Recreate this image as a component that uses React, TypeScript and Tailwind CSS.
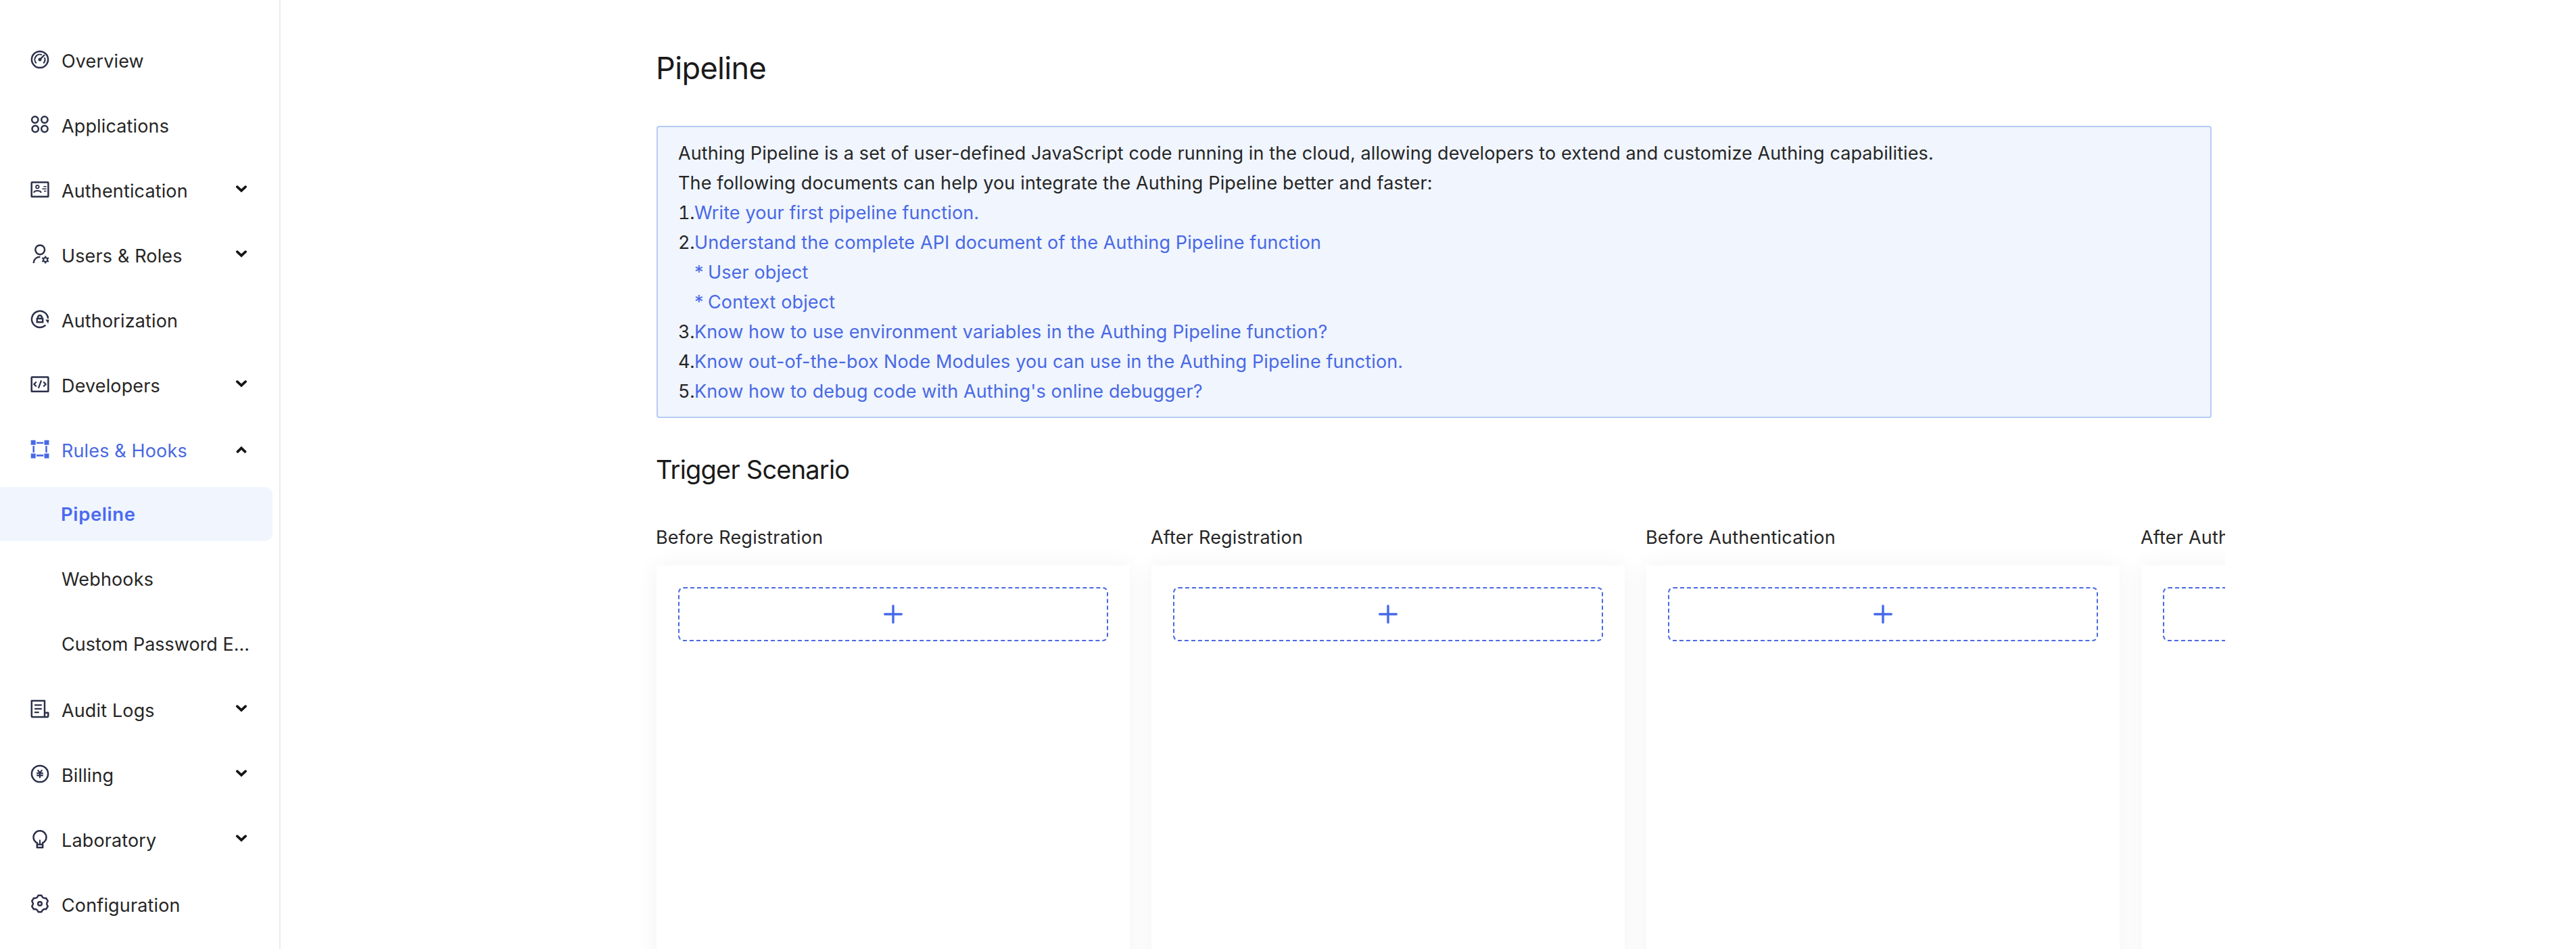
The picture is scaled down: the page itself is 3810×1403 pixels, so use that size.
import type { ReactNode } from "react";

const icons: Record<string, ReactNode> = {
  overview: (
    <>
      <circle r="12.1" />
      <path d="M-5.2 5.4A7.5 7.5 0 0 1 3 -6.9M6.9 -2.9A7.5 7.5 0 0 1 5.2 5.4" strokeWidth="2.1" />
      <path d="M0 0L7 -7" strokeWidth="2.4" />
      <circle r="2.5" fill="currentColor" stroke="none" />
    </>
  ),
  applications: (
    <>
      <circle cx="-7.2" cy="-7" r="4.7" />
      <circle cx="6.9" cy="-7" r="4.7" />
      <circle cx="-6.8" cy="6.5" r="4.7" />
      <circle cx="6.9" cy="6.5" r="4.7" />
    </>
  ),
  authentication: (
    <>
      <rect x="-12.3" y="-10.6" width="24.7" height="21.4" rx="0.6" />
      <circle cx="-3.6" cy="-3.7" r="2.3" strokeWidth="1.8" />
      <path d="M-9 4.8C-7.5 1.2 0.3 1.2 1.9 4.8" strokeWidth="2" />
      <path d="M5.3 -4.2H9.7M3.3 -0.8H9.7M6 2.5H9.7" strokeWidth="1.6" />
    </>
  ),
  users: (
    <>
      <circle cx="0.2" cy="-6.7" r="6.9" />
      <path d="M-9.3 13C-9 7.5 -5.4 3.9 0.4 3.8" />
      <path d="M8.2 2.4V13.6M3.4 5.2L13 10.8M13 5.2L3.4 10.8" strokeWidth="2.2" />
      <circle cx="8.2" cy="8" r="3" fill="#fff" strokeWidth="2" />
    </>
  ),
  authorization: (
    <>
      <path d="M12.1 -1.2A12.1 12.1 0 1 0 8.4 8.7" />
      <path d="M8.2 0.4L13.6 0.4L12.2 6.6Z" fill="currentColor" stroke="none" />
      <path d="M-4.2 -1.1H4.2V4.3H-4.2Z" />
      <path d="M-2.9 -1V-2.8A2.9 2.9 0 0 1 2.9 -2.8V-1" />
    </>
  ),
  developers: (
    <>
      <rect x="-12.3" y="-10.6" width="24.7" height="21.4" rx="0.6" />
      <path d="M-5.2 -3.5L-8.7 0L-5.2 3.5M5.2 -3.5L8.7 0L5.2 3.5" strokeWidth="2.2" />
      <path d="M2.1 -5.6L-2.1 5.8" strokeWidth="2.2" />
    </>
  ),
  rules: (
    <>
      <path
        d="M-13.3 -13.2H-6.3V-6.2H-13.3ZM6.5 -13.2H13.5V-6.2H6.5ZM-13.3 6.6H-6.3V13.6H-13.3ZM6.5 6.6H13.5V13.6H6.5Z"
        fill="currentColor"
        stroke="none"
      />
      <path d="M-5 -9.3H5.3M-5 9.4H5.3M-9.3 -4.7V5.1M9.5 -4.7V5.1" strokeWidth="2.6" />
    </>
  ),
  audit: (
    <>
      <path d="M7 12V-12.1H-12.2V10.4Q-12.2 12.1 -10.5 12.1H10.3Q12.3 12.1 12.3 10V5.7H7" strokeLinejoin="round" />
      <path d="M-8 -5.7H2.8M-8 -0.2H2.8M-8 5.2H-1.3" strokeWidth="2.2" />
    </>
  ),
  billing: (
    <>
      <circle r="12.1" />
      <path d="M-3.4 -5.6L0 -1.7L3.4 -5.6M-4.8 -0.9H4.8M-4.8 2.4H4.8M0 -1.7V6.2" strokeWidth="2.1" />
    </>
  ),
  laboratory: (
    <>
      <path d="M-4 8.2V6.2C-7.6 4.5 -9.5 1.5 -9.5 -2.2A9.5 9.5 0 0 1 9.5 -2.2C9.5 1.5 7.6 4.5 4 6.2V8.2" />
      <path d="M-4.2 8.4H4.2V13.1H-4.2Z" strokeLinejoin="round" />
      <path d="M0 1.4V8" strokeWidth="2" />
    </>
  ),
  configuration: (
    <>
      <path
        d="M-2.4 -12.2H2.4L4.2 -9.2Q6.4 -7.6 9.2 -8.2L11.8 -3.9Q10 -1.2 10.2 0Q10 1.2 11.8 3.9L9.2 8.2Q6.4 7.6 4.2 9.2L2.4 12.2H-2.4L-4.2 9.2Q-6.4 7.6 -9.2 8.2L-11.8 3.9Q-10 1.2 -10.2 0Q-10 -1.2 -11.8 -3.9L-9.2 -8.2Q-6.4 -7.6 -4.2 -9.2Z"
        strokeLinejoin="round"
      />
      <circle r="2.8" />
    </>
  ),
};

function Icon({ name }: { name: string }) {
  return (
    <svg
      viewBox="-15 -15 30 30"
      className="mb-1 size-[30px] shrink-0"
      fill="none"
      stroke="currentColor"
      strokeWidth="2.5"
    >
      {icons[name]}
    </svg>
  );
}

function Chevron({ up }: { up?: boolean }) {
  return (
    <svg
      viewBox="-9 -6 18 12"
      className={up ? "mb-[3px] h-3 w-[18px] text-[#161616]" : "mb-[6px] h-3 w-[18px] text-[#161616]"}
      fill="none"
      stroke="currentColor"
      strokeWidth="3.8"
      strokeLinecap="round"
    >
      <path d={up ? "M-5.6 2.8L0 -2.6L5.6 2.8" : "M-6.2 -2.8L0 2.9L6.2 -2.8"} />
    </svg>
  );
}

type Item = { icon: string; label: string; arrow?: "up" | "down" };

const top: Item[] = [
  { icon: "overview", label: "Overview" },
  { icon: "applications", label: "Applications" },
  { icon: "authentication", label: "Authentication", arrow: "down" },
  { icon: "users", label: "Users & Roles", arrow: "down" },
  { icon: "authorization", label: "Authorization" },
  { icon: "developers", label: "Developers", arrow: "down" },
  { icon: "rules", label: "Rules & Hooks", arrow: "up" },
];

const bottom: Item[] = [
  { icon: "audit", label: "Audit Logs", arrow: "down" },
  { icon: "billing", label: "Billing", arrow: "down" },
  { icon: "laboratory", label: "Laboratory", arrow: "down" },
  { icon: "configuration", label: "Configuration" },
];

function NavItem({ icon, label, arrow }: Item) {
  const open = arrow === "up";
  return (
    <a className={`flex h-20 items-center pr-[47px] pl-11 ${open ? "text-[#4969e4]" : "text-[#2b3049]"}`}>
      <Icon name={icon} />
      <span className={`ml-[17px] flex-1 pt-0.5 ${open ? "text-[#4969e4]" : "text-[#262626]"}`}>{label}</span>
      {arrow && <Chevron up={open} />}
    </a>
  );
}

function Sidebar() {
  return (
    <nav className="flex w-[415px] shrink-0 flex-col gap-4 border-r-2 border-[#ebebeb] pt-[50px] text-[27px] tracking-[0.14px] whitespace-nowrap">
      {top.map((i) => (
        <NavItem key={i.label} {...i} />
      ))}
      <div className="-mt-0.5 mb-0.5 flex flex-col gap-4 text-[#262626]">
        <a className="-ml-2 flex h-20 w-[411px] items-center rounded-xl bg-[#f0f5fe] pt-0.5 pl-[98px] text-[27.5px] font-semibold tracking-[0.6px] text-[#4a6af0]">
          Pipeline
        </a>
        <a className="flex h-20 items-center pt-0.5 pl-[91px]">Webhooks</a>
        <a className="flex h-20 items-center pt-0.5 pl-[91px] tracking-[0px]">Custom Password E...</a>
      </div>
      {bottom.map((i) => (
        <NavItem key={i.label} {...i} />
      ))}
    </nav>
  );
}

const docs = [
  { n: "1.", text: "Write your first pipeline function." },
  { n: "2.", text: "Understand the complete API document of the Authing Pipeline function" },
  { n: "", text: "User object" },
  { n: "", text: "Context object" },
  { n: "3.", text: "Know how to use environment variables in the Authing Pipeline function?" },
  { n: "4.", text: "Know out-of-the-box Node Modules you can use in the Authing Pipeline function." },
  { n: "5.", text: "Know how to debug code with Authing's online debugger?" },
];

const scenarios = ["Before Registration", "After Registration", "Before Authentication", "After Authentication"];

export default function App() {
  return (
    <div className="flex h-[1403px] w-full overflow-hidden bg-white font-[Inter,sans-serif] text-[#262626]">
      <Sidebar />
      <main className="w-[2876px] shrink-0 overflow-hidden pl-[556px]">
        <h1 className="mt-[73px] -ml-px h-14 text-[45px] leading-[56px] tracking-[-0.6px] text-[#1a1a1a]">Pipeline</h1>
        <section className="mt-[57px] h-[432px] w-[2300px] rounded border-2 border-[#b7cbf3] bg-[#f0f5fe] px-[30px] pt-[17px] text-[27px] leading-[44px] tracking-[0.12px] whitespace-nowrap">
          <p className="tracking-[0.1px]">
            Authing Pipeline is a set of user-defined JavaScript code running in the cloud, allowing developers to
            extend and customize Authing capabilities.
          </p>
          <p className="tracking-[0.15px]">The following documents can help you integrate the Authing Pipeline better and faster:</p>
          <ul>
            {docs.map((d) => (
              <li key={d.text} className="flex">
                <span className="w-6 shrink-0 tracking-[-0.3px] tabular-nums">{d.n}</span>
                {!d.n && <span className="w-5 shrink-0 text-[#4969e4]">*</span>}
                <a className="text-[#4969e4]">{d.text}</a>
              </li>
            ))}
          </ul>
        </section>
        <h2 className="mt-[50px] -ml-px h-[52px] text-[38px] leading-[52px] tracking-[-0.8px] text-[#1a1a1a]">
          Trigger Scenario
        </h2>
        <div className="-ml-10 mt-[52px] flex gap-8 overflow-hidden pl-10 text-[27px] leading-[44px]">
          {scenarios.map((s) => (
            <div key={s} className="w-[700px] shrink-0">
              <h3 className="-ml-px h-11 pt-px tracking-[0.2px] whitespace-nowrap">{s}</h3>
              <div className="mt-5 h-[640px] bg-white px-8 pt-8 shadow-[0_0_32px_rgba(0,0,0,0.055)]">
                <button className="flex h-20 w-full items-center justify-center rounded-lg border-2 border-dashed border-[#4969e0]">
                  <svg viewBox="-14 -14 28 28" className="size-7" stroke="#4668ea" strokeWidth="3.4" strokeLinecap="round">
                    <path d="M-12.3 0H12.3M0 -12.3V12.3" />
                  </svg>
                </button>
              </div>
            </div>
          ))}
        </div>
      </main>
    </div>
  );
}
